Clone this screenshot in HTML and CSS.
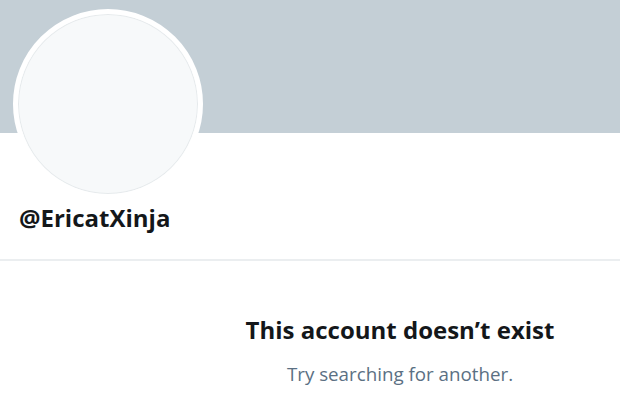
FILE: index.html
```html
<!DOCTYPE html>
<html lang="en">
<head>
    <meta charset="UTF-8">
    <meta name="viewport" content="width=device-width, initial-scale=1.0">
    <title>@EricatXinja</title>
    <link rel="stylesheet" href="styles.css">
</head>
<body>
    <div class="profile">
        <!-- Banner dan foto profil -->
        <div class="banner"></div>
        <div class="head">
            <div class="avatar"></div>
            <div class="handle">@EricatXinja</div>
        </div>
        <div class="divider"></div>

        <!-- Pesan akun tidak ada -->
        <div class="empty">
            <h2>This account doesn’t exist</h2>
            <p>Try searching for another.</p>
        </div>
    </div>
</body>
</html>
```

FILE: styles.css
```css
body {
    margin: 0;
    background: #fff;
    font-family: "Open Sans", "Noto Sans", sans-serif;
    overflow: hidden;
}
.profile {
    width: 620px;
    height: 413px;
}
.banner {
    height: 133px;
    background-color: #c4cfd6;
}
.head {
    position: relative;
    height: 126px;
    padding-left: 19px;
}
.avatar {
    position: absolute;
    left: 13px;
    top: -124px;
    width: 180px;
    height: 180px;
    border-radius: 50%;
    background: #f7f9fa;
    border: 5px solid #fff;
    box-shadow: inset 0 0 0 1px #e6eaec;
}
.handle {
    padding-top: 70px;
    font-size: 24px;
    line-height: 30px;
    font-weight: 700;
    color: #14171a;
}
.divider {
    height: 2px;
    background: #ebeef0;
}
.empty {
    width: 400px;
    margin-left: 200px;
    text-align: center;
    padding-top: 53px;
}
.empty h2 {
    margin: 0;
    font-size: 24px;
    line-height: 32px;
    font-weight: 700;
    color: #14171a;
}
.empty p {
    margin: 16px 0 0;
    font-size: 18.75px;
    line-height: 24px;
    color: #5b7083;
}
```
